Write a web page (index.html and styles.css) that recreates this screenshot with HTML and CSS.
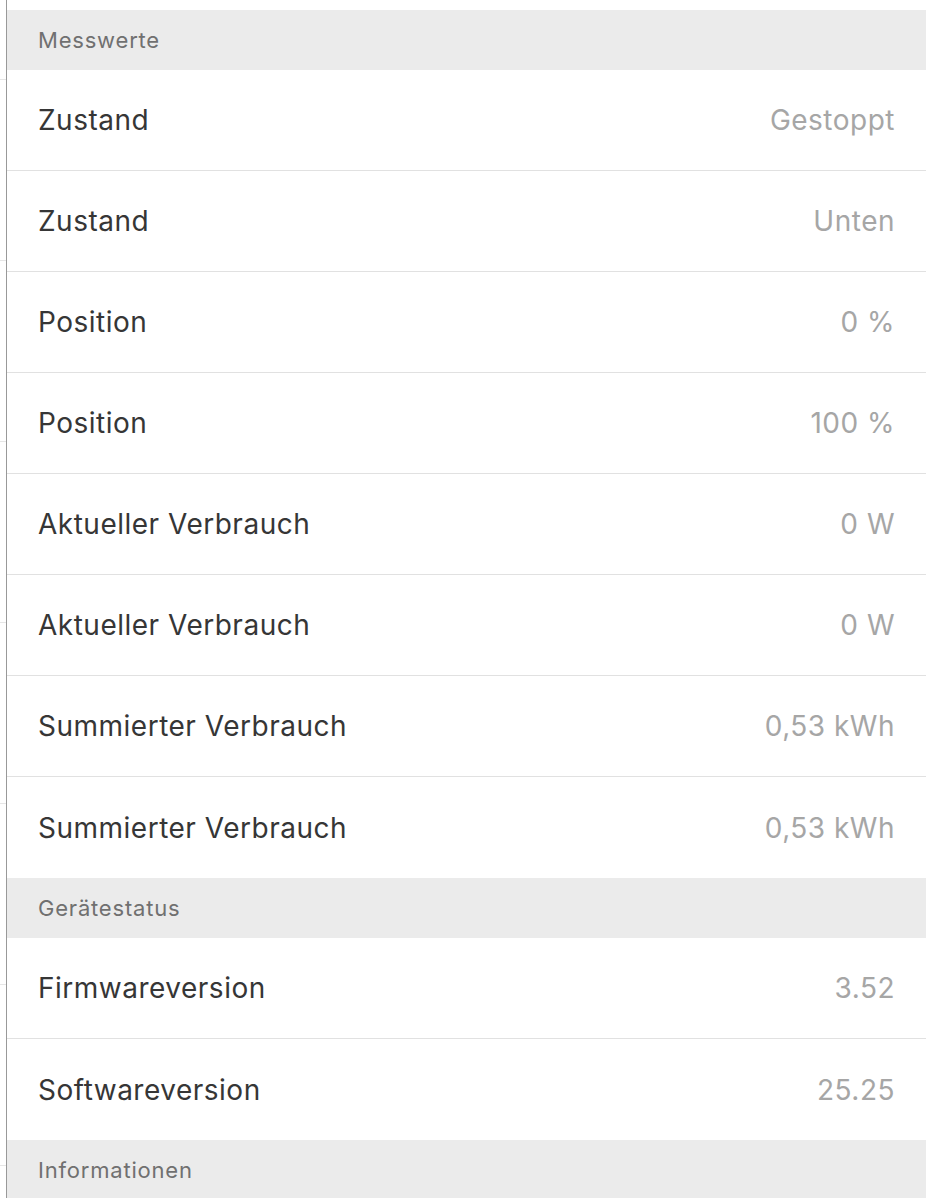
FILE: index.html
```html
<!DOCTYPE html>
<html lang="de">
<head>
<meta charset="utf-8">
<title>Messwerte</title>
<link rel="stylesheet" href="styles.css">
</head>
<body>
<div class="page">
  <div class="edge"></div>
  <main class="panel">
    <section class="group">
      <h2 class="group-title">Messwerte</h2>
      <ul class="rows">
        <li class="row"><span class="label">Zustand</span><span class="value">Gestoppt</span></li>
        <li class="row"><span class="label">Zustand</span><span class="value">Unten</span></li>
        <li class="row"><span class="label">Position</span><span class="value">0 %</span></li>
        <li class="row"><span class="label">Position</span><span class="value">100 %</span></li>
        <li class="row"><span class="label">Aktueller Verbrauch</span><span class="value">0 W</span></li>
        <li class="row"><span class="label">Aktueller Verbrauch</span><span class="value">0 W</span></li>
        <li class="row"><span class="label">Summierter Verbrauch</span><span class="value">0,53 kWh</span></li>
        <li class="row"><span class="label">Summierter Verbrauch</span><span class="value">0,53 kWh</span></li>
      </ul>
    </section>
    <section class="group">
      <h2 class="group-title">Gerätestatus</h2>
      <ul class="rows">
        <li class="row"><span class="label">Firmwareversion</span><span class="value">3.52</span></li>
        <li class="row"><span class="label">Softwareversion</span><span class="value">25.25</span></li>
      </ul>
    </section>
    <section class="group">
      <h2 class="group-title">Informationen</h2>
    </section>
  </main>
</div>
</body>
</html>
```

FILE: styles.css
```css
html, body {
  margin: 0;
  padding: 0;
  background: #ffffff;
}

body {
  font-family: Inter, "Liberation Sans", Arial, sans-serif;
  overflow: hidden;
}

.page {
  display: flex;
  min-height: 1198px;
}

.edge {
  width: 6px;
  flex: none;
  background-image: repeating-linear-gradient(to bottom, #e6e6e6 0 1px, transparent 1px 181px);
  background-position: 0 79px;
}

.panel {
  flex: 1;
  border-left: 1px solid #999999;
  padding-top: 10px;
}

.group {
  margin: 0;
}

.group-title {
  margin: 0;
  height: 60px;
  display: flex;
  align-items: center;
  padding: 0 31px;
  background: #ebebeb;
  color: #707070;
  font-size: 22px;
  font-weight: 400;
  letter-spacing: 0.8px;
}

.rows {
  list-style: none;
  margin: 0;
  padding: 0;
}

.row {
  height: 100px;
  display: flex;
  align-items: center;
  justify-content: space-between;
  padding: 0 31px;
  font-size: 28px;
  letter-spacing: 0.5px;
  border-bottom: 1px solid #e1e1e1;
}

.row:last-child {
  border-bottom: none;
  height: 101px;
}

.label {
  color: #363636;
}

.value {
  color: #a6a6a6;
}
```
